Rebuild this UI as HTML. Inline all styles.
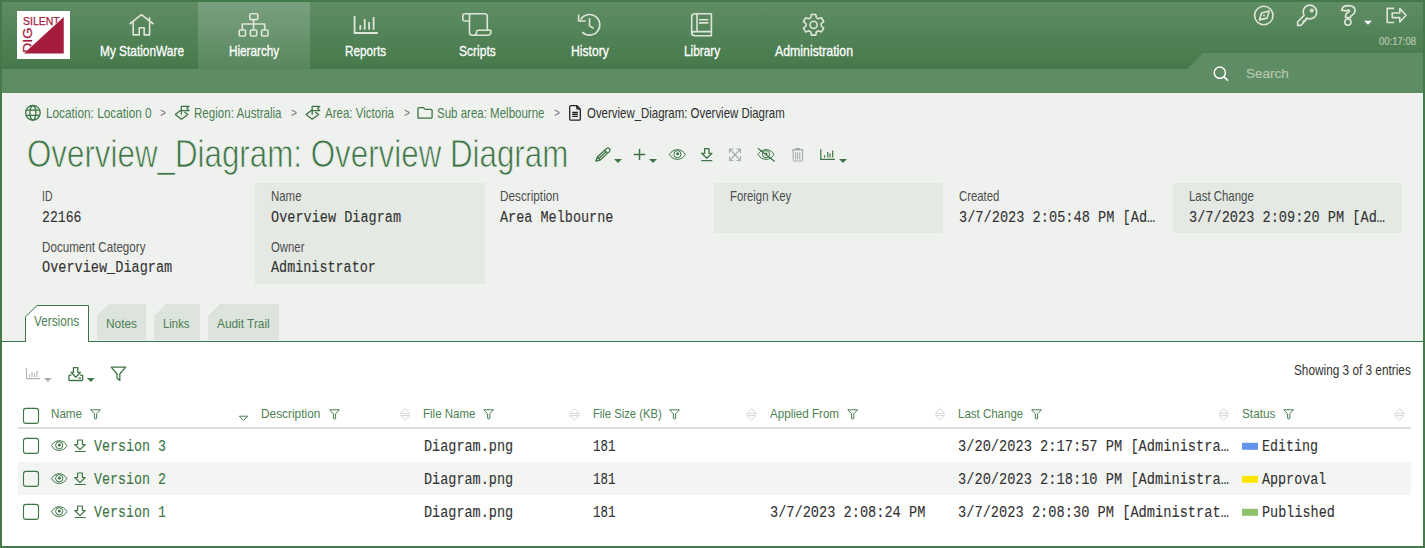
<!DOCTYPE html>
<html><head><meta charset="utf-8"><style>
html,body{margin:0;padding:0;width:1425px;height:548px;overflow:hidden;background:#eff1ee;}
.r{position:absolute;}
.t{position:absolute;white-space:nowrap;}
.ov{position:absolute;left:0;top:0;}
</style></head><body>
<div class="r" style="left:0px;top:0px;width:1425px;height:548px;background:#447a4a;"></div><div class="r" style="left:2px;top:2px;width:1421px;height:544px;background:#eff1ee;"></div><div class="r" style="left:2px;top:341px;width:1421px;height:205px;background:#ffffff;"></div><div class="r" style="left:2px;top:2px;width:1421px;height:67px;background:linear-gradient(#5f8d65,#45794b);"></div><div class="r" style="left:2px;top:69px;width:1421px;height:24px;background:#5e8c64;"></div><div class="r" style="left:198px;top:2px;width:112px;height:67px;background:linear-gradient(rgba(255,255,255,0.17),rgba(255,255,255,0.10));"></div><div class="r" style="left:255px;top:183px;width:230px;height:101px;background:#e4e9e4;"></div><div class="r" style="left:714px;top:183px;width:229px;height:50px;background:#e4e9e4;"></div><div class="r" style="left:1173px;top:183px;width:229px;height:50px;background:#e4e9e4;"></div><div class="r" style="left:18px;top:462px;width:1393px;height:33px;background:#f3f5f3;"></div><div class="r" style="left:18px;top:427px;width:1393px;height:2px;background:#dadfe1;"></div><div class="r" style="left:17px;top:11px;width:53px;height:48px;background:#ffffff;"></div><div class="t" style="left:23.00px;top:15.00px;font-family:'Liberation Sans', sans-serif;font-weight:400;font-size:11.75px;line-height:11.75px;color:#a51d3d;transform:scaleX(0.8924);transform-origin:0 0;-webkit-text-stroke:0.25px #a51d3d;">SILENT</div><div class="t" style="left:21.80px;top:52.50px;font-family:'Liberation Sans', sans-serif;font-weight:400;font-size:12.5px;line-height:12.5px;color:#a51d3d;transform:rotate(-90deg) scaleX(1.1371);transform-origin:0 0;-webkit-text-stroke:0.25px #a51d3d;">DIG</div><svg class="ov" width="1425" height="548" viewBox="0 0 1425 548"><polygon points="1187,69 1203,53 1423,53 1423,69" fill="#5e8c64"/><polygon points="97,316 109,304 146,304 146,340 97,340" fill="#dde3dd"/><polygon points="154,316 166,304 200,304 200,340 154,340" fill="#dde3dd"/><polygon points="208,316 220,304 279,304 279,340 208,340" fill="#dde3dd"/><rect x="2" y="341" width="1421" height="1" fill="#3d7544"/><polygon points="25.5,341.5 25.5,316.8 37,305.5 88.5,305.5 88.5,341.5" fill="#fff" stroke="#3d7544" stroke-width="1"/><rect x="26" y="340" width="62" height="3" fill="#fff"/><polygon points="22.4,54.5 64.75,54.5 64.75,15.4" fill="#ffffff"/><polygon points="23.9,53.5 63.75,53.5 63.75,16.9" fill="#a51d3d"/><path fill="none" stroke="#dfe5d8" stroke-width="1.6" stroke-linejoin="round" d="M129.7 24 L141.4 14.7 L153.5 24 M149.6 17.2 V21.8 M133.2 22.3 V34.9 H139.2 V27.8 H144.2 V34.9 H149.6 V22.3"/><g fill="none" stroke="#dfe5d8" stroke-width="1.6" stroke-linejoin="round"><rect x="249.8" y="13.8" width="8" height="5.8" rx="1"/><rect x="239.2" y="30" width="6.3" height="6" rx="1"/><rect x="250.4" y="30" width="6.3" height="6" rx="1"/><rect x="261.6" y="30" width="6.3" height="6" rx="1"/><path d="M253.6 19.6 V30 M242.3 30 V24 H264.7 V30"/></g><path fill="none" stroke="#dfe5d8" stroke-width="1.8" d="M354.6 16 V33 H377.8 M360.3 25 V29.8 M364.7 19 V29.8 M369.1 22 V29.8 M373.6 17.1 V29.8"/><path fill="none" stroke="#dfe5d8" stroke-width="1.6" stroke-linejoin="round" d="M469.5 21 H464.8 Q462.8 21 462.8 19 V16 Q462.8 13.8 465 13.8 H484.5 Q487.3 13.8 487.3 16.6 V30.3 M469.5 14.5 V32.5 Q469.5 35.2 472.5 35.2 H487.8 Q490.6 35.2 490.8 32.5 V30.3 H478.5 Q476.5 30.3 476.5 32.5 Q476.5 35.2 473.5 35.2"/><path fill="none" stroke="#dfe5d8" stroke-width="1.6" stroke-linejoin="round" d="M582.2 32.1 A10.3 10.3 0 1 0 580.6 19.65 M578.6 14.4 V21 H585.7 M589.5 18.2 V25.9 L593.6 28.3"/><path fill="none" stroke="#dfe5d8" stroke-width="1.6" stroke-linejoin="round" d="M711.4 13.8 V35.7 H695 Q691.7 35.7 691.7 33.6 V17 Q691.7 13.8 695 13.8 Z M697 13.8 V31.6 M691.7 33.6 Q691.7 31.6 695 31.6 H711.4 M699 19.8 H708.4 M699 22.9 H708.4"/><polygon fill="none" stroke="#dfe5d8" stroke-width="1.6" stroke-linejoin="round" points="810.84,17.61 811.40,14.43 815.80,14.43 816.36,17.61 818.45,18.82 821.48,17.71 823.68,21.52 821.21,23.60 821.21,26.00 823.68,28.08 821.48,31.89 818.45,30.78 816.36,31.99 815.80,35.17 811.40,35.17 810.84,31.99 808.75,30.78 805.72,31.89 803.52,28.08 805.99,26.00 805.99,23.60 803.52,21.52 805.72,17.71 808.75,18.82"/><circle fill="none" stroke="#dfe5d8" stroke-width="1.6" stroke-linejoin="round" cx="813.6" cy="24.8" r="3.6"/><circle fill="none" stroke="#dfe5d8" stroke-width="1.6" stroke-linejoin="round" cx="1263.8" cy="15.5" r="9.2"/><path fill="none" stroke="#dfe5d8" stroke-width="1.6" stroke-linejoin="round" d="M1269.2 10.9 L1261.5 13 L1259.5 19.9 L1267.1 18.1 Z"/><circle cx="1264" cy="15.5" r="0.9" fill="#dfe5d8"/><path fill="none" stroke="#dfe5d8" stroke-width="1.6" stroke-linejoin="round" d="M1304.0 15.4 A6.8 6.8 0 1 1 1306.7 18.0 L1305.6 19.2 L1306.3 19.9 L1304.9 21.3 L1304.2 20.6 L1303 21.8 L1303.7 22.5 L1300.8 25.4 H1297.6 V22 Z"/><circle fill="none" stroke="#dfe5d8" stroke-width="1.6" stroke-linejoin="round" cx="1311.8" cy="10.4" r="1.2" stroke-width="1.2"/><path fill="none" stroke="#dfe5d8" stroke-width="1.6" stroke-linejoin="round" d="M1341.6 10.3 Q1342.3 5.6 1348.3 5.6 Q1355.1 5.8 1355.1 10.6 Q1355.1 13.6 1351.9 15.2 Q1350.7 15.9 1350.7 17 V17.6 H1345.5 V16.6 Q1345.5 13.5 1348.5 12 Q1349.8 11.3 1349.3 10.5 Q1348.4 9.3 1346.6 10.9 Z"/><circle fill="none" stroke="#dfe5d8" stroke-width="1.6" stroke-linejoin="round" cx="1347.9" cy="22.1" r="3.1"/><polygon points="1364,20.8 1372,20.8 1368,24.8" fill="#fff"/><path fill="none" stroke="#dfe5d8" stroke-width="1.6" stroke-linejoin="round" d="M1394.2 8.4 H1387.2 V22.5 H1394.2 M1392.2 13 H1399.8 V8.6 L1406 15.3 L1399.8 22 V17.6 H1392.2 Z"/><circle fill="none" stroke="#ffffff" stroke-width="1.5" cx="1219.8" cy="72.7" r="5.6"/><path stroke="#ffffff" stroke-width="1.6" d="M1223.8 76.7 L1228 80.7"/><g fill="none" stroke="#3d7544" stroke-width="1.3" stroke-linejoin="round"><circle cx="32.9" cy="112.8" r="7.3"/><ellipse cx="32.9" cy="112.8" rx="3" ry="7.3"/><path d="M25.8 110.2 H40 M25.8 115.3 H40"/></g><path fill="none" stroke="#3d7544" stroke-width="1.3" stroke-linejoin="round" transform="translate(0.0,0)" d="M181.4 109.8 L175.3 114.5 L181.4 119.3 L187.8 114.5 L184.5 111.9 M181.4 114.8 V106.3 H189 L186.8 108.4 L189 110.6 H181.4"/><path fill="none" stroke="#3d7544" stroke-width="1.3" stroke-linejoin="round" transform="translate(130.8,0)" d="M181.4 109.8 L175.3 114.5 L181.4 119.3 L187.8 114.5 L184.5 111.9 M181.4 114.8 V106.3 H189 L186.8 108.4 L189 110.6 H181.4"/><path fill="none" stroke="#3d7544" stroke-width="1.3" stroke-linejoin="round" d="M418 118.1 V108.8 Q418 107.6 419.2 107.6 H423.5 L425.3 109.4 H430.9 Q432.1 109.4 432.1 110.6 V116.9 Q432.1 118.1 430.9 118.1 Z"/><path fill="none" stroke="#222" stroke-width="1.3" stroke-linejoin="round" d="M569.7 106.9 Q569.7 105.7 570.9 105.7 H577 L580.3 109.1 V118.9 Q580.3 120.1 579.1 120.1 H570.9 Q569.7 120.1 569.7 118.9 Z M576.8 105.7 V108.1 Q576.8 109.2 577.9 109.2 H580.3 M572.2 112.5 H577.9 M572.2 114.4 H577.9 M572.2 116.4 H577.9"/><path fill="none" stroke="#3d7544" stroke-width="1.3" stroke-linejoin="round" d="M595.80 161.20 L597.33 156.95 L606.56 148.51 A2.1 2.1 0 0 1 609.39 151.61 L600.17 160.05 Z M597.33 156.95 L600.17 160.05 M598.75 158.50 L606.13 151.75 M604.71 150.20 L607.55 153.30"/><path fill="#3d7544" d="M595.80 161.20 L596.37 159.46 L597.59 160.78 Z"/><polygon points="614,159 622,159 618.0,163" fill="#3d7544"/><path fill="none" stroke="#3d7544" stroke-width="1.5" d="M633.8 154.5 H645.2 M639.5 149.1 V160"/><polygon points="649,159 657,159 653.0,163" fill="#3d7544"/><path fill="none" stroke="#3d7544" stroke-width="1.0" d="M669.4 154.5 C673.0 148.0 681.8 148.0 685.4 154.5 C681.8 161.0 673.0 161.0 669.4 154.5 Z"/><circle fill="none" stroke="#3d7544" stroke-width="1.0" cx="677.4" cy="154.2" r="3.6"/><circle fill="#3d7544" cx="677.6" cy="153.8" r="1.5"/><path fill="none" stroke="#3d7544" stroke-width="1.3" stroke-linejoin="round" d="M704.6 148.6 H709 V153.3 H712 L706.8 158.3 L701.6 153.3 H704.6 Z M701.3 160.6 H712.3"/><path fill="none" stroke="#a8aca8" stroke-width="1.1" stroke-linejoin="round" d="M729.5 149 L740.5 160.5 M740.5 149 L729.5 160.5 M729.5 153 V149 H733.5 M736.5 149 H740.5 V153 M740.5 156.5 V160.5 H736.5 M733.5 160.5 H729.5 V156.5"/><path fill="none" stroke="#3d7544" stroke-width="1.0" d="M758.0 154.5 C761.6 148.0 770.4 148.0 774.0 154.5 C770.4 161.0 761.6 161.0 758.0 154.5 Z"/><circle fill="none" stroke="#3d7544" stroke-width="1.0" cx="766" cy="154.2" r="3.6"/><circle fill="#3d7544" cx="766.2" cy="153.8" r="1.2"/><path stroke="#3d7544" stroke-width="1.3" d="M757.8 148.2 L774.7 161.4"/><path fill="none" stroke="#a8aca8" stroke-width="1.1" stroke-linejoin="round" d="M792 149.9 H803.3 M795.6 149.6 V148.6 H799.7 V149.6 M793.2 150.2 V159.6 Q793.2 161 794.6 161 H801.2 Q802.6 161 802.6 159.6 V150.2 M795.6 152.2 V159.4 M797.7 152.2 V159.4 M799.8 152.2 V159.4"/><path fill="none" stroke="#3d7544" stroke-width="1.2" d="M820.8 149.3 V159.3 H835 M824.6 155.2 V157.6 M827.8 152 V157.6 M830.1 153.4 V157.6 M832.7 150.4 V157.6"/><polygon points="839,159 847,159 843.0,163" fill="#3d7544"/><path fill="none" stroke="#b0b3b0" stroke-width="1.1" d="M26.5 368 V378.6 H40 M29.5 374.5 V377 M32 372 V377 M34.5 373 V377 M37 370.5 V377"/><polygon points="44,378 51.7,378 47.85,382" fill="#a8aca8"/><path fill="none" stroke="#3d7544" stroke-width="1.3" stroke-linejoin="round" d="M73.4 367.6 H77.8 V372.3 H80.5 L75.8 377.2 L71.1 372.3 H73.4 Z M71.6 375.2 H69.6 Q68.9 375.2 68.9 376 V379.8 Q68.9 380.5 69.6 380.5 H82 Q82.7 380.5 82.7 379.8 V376 Q82.7 375.2 82 375.2 H80 M78.4 378.2 H81"/><polygon points="87,378 94.6,378 90.8,382" fill="#3d7544"/><path fill="none" stroke="#3d7544" stroke-width="1.3" stroke-linejoin="round" d="M111.2 367.2 H125.6 L119.8 374 V380.4 L117 378 V374 Z"/><rect x="23.5" y="408.4" width="15" height="15" rx="2.5" fill="none" stroke="#3d7544" stroke-width="1.1"/><path fill="none" stroke="#3d7544" stroke-width="0.95" stroke-linejoin="round" d="M90.6 409.8 H100.39999999999999 L96.6 413.8 V418.3 Q96.6 418.8 96.1 418.8 H94.89999999999999 Q94.39999999999999 418.8 94.39999999999999 418.3 V413.8 Z"/><path fill="none" stroke="#3d7544" stroke-width="0.95" stroke-linejoin="round" d="M329.6 409.8 H339.40000000000003 L335.6 413.8 V418.3 Q335.6 418.8 335.1 418.8 H333.90000000000003 Q333.40000000000003 418.8 333.40000000000003 418.3 V413.8 Z"/><path fill="none" stroke="#3d7544" stroke-width="0.95" stroke-linejoin="round" d="M483.8 409.8 H493.6 L489.8 413.8 V418.3 Q489.8 418.8 489.3 418.8 H488.1 Q487.6 418.8 487.6 418.3 V413.8 Z"/><path fill="none" stroke="#3d7544" stroke-width="0.95" stroke-linejoin="round" d="M669.6 409.8 H679.4 L675.6 413.8 V418.3 Q675.6 418.8 675.1 418.8 H673.9 Q673.4 418.8 673.4 418.3 V413.8 Z"/><path fill="none" stroke="#3d7544" stroke-width="0.95" stroke-linejoin="round" d="M847.8 409.8 H857.5999999999999 L853.8 413.8 V418.3 Q853.8 418.8 853.3 418.8 H852.0999999999999 Q851.5999999999999 418.8 851.5999999999999 418.3 V413.8 Z"/><path fill="none" stroke="#3d7544" stroke-width="0.95" stroke-linejoin="round" d="M1031.6 409.8 H1041.3999999999999 L1037.6 413.8 V418.3 Q1037.6 418.8 1037.1 418.8 H1035.8999999999999 Q1035.3999999999999 418.8 1035.3999999999999 418.3 V413.8 Z"/><path fill="none" stroke="#3d7544" stroke-width="0.95" stroke-linejoin="round" d="M1283.8 409.8 H1293.6 L1289.8 413.8 V418.3 Q1289.8 418.8 1289.3 418.8 H1288.1 Q1287.6 418.8 1287.6 418.3 V413.8 Z"/><path fill="none" stroke="#d3d6d3" stroke-width="1.0" stroke-linejoin="round" d="M400.3 413.4 L405.0 408.8 L409.7 413.4 Z M400.3 415.59999999999997 H409.7 L405.0 420.2 Z"/><path fill="none" stroke="#d3d6d3" stroke-width="1.0" stroke-linejoin="round" d="M569.8 413.4 L574.5 408.8 L579.1999999999999 413.4 Z M569.8 415.59999999999997 H579.1999999999999 L574.5 420.2 Z"/><path fill="none" stroke="#d3d6d3" stroke-width="1.0" stroke-linejoin="round" d="M746.8 413.4 L751.5 408.8 L756.1999999999999 413.4 Z M746.8 415.59999999999997 H756.1999999999999 L751.5 420.2 Z"/><path fill="none" stroke="#d3d6d3" stroke-width="1.0" stroke-linejoin="round" d="M935.2 413.4 L939.9000000000001 408.8 L944.6 413.4 Z M935.2 415.59999999999997 H944.6 L939.9000000000001 420.2 Z"/><path fill="none" stroke="#d3d6d3" stroke-width="1.0" stroke-linejoin="round" d="M1219 413.4 L1223.7 408.8 L1228.4 413.4 Z M1219 415.59999999999997 H1228.4 L1223.7 420.2 Z"/><path fill="none" stroke="#d3d6d3" stroke-width="1.0" stroke-linejoin="round" d="M1394.8 413.4 L1399.5 408.8 L1404.2 413.4 Z M1394.8 415.59999999999997 H1404.2 L1399.5 420.2 Z"/><path fill="none" stroke="#3d7544" stroke-width="0.95" stroke-linejoin="round" d="M239.4 416.2 H247.6 L243.5 420.5 Z"/><rect x="23.5" y="438.4" width="15" height="15" rx="2.5" fill="none" stroke="#3d7544" stroke-width="1.1"/><path fill="none" stroke="#3d7544" stroke-width="1.0" d="M51.5 445.59999999999997 C54.965 439.09999999999997 63.435 439.09999999999997 66.9 445.59999999999997 C63.435 452.09999999999997 54.965 452.09999999999997 51.5 445.59999999999997 Z"/><circle fill="none" stroke="#3d7544" stroke-width="1.0" cx="59.2" cy="445.29999999999995" r="3.6"/><circle fill="#3d7544" cx="59.400000000000006" cy="444.9" r="1.5"/><path fill="none" stroke="#3d7544" stroke-width="1.2" stroke-linejoin="round" d="M77.6 440.0 H82.4 V444.5 H85.2 L80 449.59999999999997 L74.8 444.5 H77.6 Z M74.8 451.5 H85.7"/><rect x="23.5" y="471.4" width="15" height="15" rx="2.5" fill="none" stroke="#3d7544" stroke-width="1.1"/><path fill="none" stroke="#3d7544" stroke-width="1.0" d="M51.5 478.59999999999997 C54.965 472.09999999999997 63.435 472.09999999999997 66.9 478.59999999999997 C63.435 485.09999999999997 54.965 485.09999999999997 51.5 478.59999999999997 Z"/><circle fill="none" stroke="#3d7544" stroke-width="1.0" cx="59.2" cy="478.29999999999995" r="3.6"/><circle fill="#3d7544" cx="59.400000000000006" cy="477.9" r="1.5"/><path fill="none" stroke="#3d7544" stroke-width="1.2" stroke-linejoin="round" d="M77.6 473.0 H82.4 V477.5 H85.2 L80 482.59999999999997 L74.8 477.5 H77.6 Z M74.8 484.5 H85.7"/><rect x="23.5" y="504.4" width="15" height="15" rx="2.5" fill="none" stroke="#3d7544" stroke-width="1.1"/><path fill="none" stroke="#3d7544" stroke-width="1.0" d="M51.5 511.59999999999997 C54.965 505.09999999999997 63.435 505.09999999999997 66.9 511.59999999999997 C63.435 518.0999999999999 54.965 518.0999999999999 51.5 511.59999999999997 Z"/><circle fill="none" stroke="#3d7544" stroke-width="1.0" cx="59.2" cy="511.29999999999995" r="3.6"/><circle fill="#3d7544" cx="59.400000000000006" cy="510.9" r="1.5"/><path fill="none" stroke="#3d7544" stroke-width="1.2" stroke-linejoin="round" d="M77.6 506.0 H82.4 V510.5 H85.2 L80 515.6 L74.8 510.5 H77.6 Z M74.8 517.5 H85.7"/><rect x="1242" y="442.8" width="16" height="7" fill="#6495ed"/><rect x="1242" y="475.8" width="16" height="7" fill="#ffe600"/><rect x="1242" y="508.8" width="16" height="7" fill="#8fc16a"/></svg><div class="t" style="left:100.00px;top:44.00px;font-family:'Liberation Sans', sans-serif;font-weight:400;font-size:14.5px;line-height:14.5px;color:#ffffff;transform:scaleX(0.8185);transform-origin:0 0;-webkit-text-stroke:0.3px #fff;">My StationWare</div><div class="t" style="left:228.60px;top:44.00px;font-family:'Liberation Sans', sans-serif;font-weight:400;font-size:14.5px;line-height:14.5px;color:#ffffff;transform:scaleX(0.8089);transform-origin:0 0;-webkit-text-stroke:0.3px #fff;">Hierarchy</div><div class="t" style="left:345.30px;top:44.00px;font-family:'Liberation Sans', sans-serif;font-weight:400;font-size:14.5px;line-height:14.5px;color:#ffffff;transform:scaleX(0.8099);transform-origin:0 0;-webkit-text-stroke:0.3px #fff;">Reports</div><div class="t" style="left:459.00px;top:44.00px;font-family:'Liberation Sans', sans-serif;font-weight:400;font-size:14.5px;line-height:14.5px;color:#ffffff;transform:scaleX(0.8327);transform-origin:0 0;-webkit-text-stroke:0.3px #fff;">Scripts</div><div class="t" style="left:570.80px;top:44.00px;font-family:'Liberation Sans', sans-serif;font-weight:400;font-size:14.5px;line-height:14.5px;color:#ffffff;transform:scaleX(0.8399);transform-origin:0 0;-webkit-text-stroke:0.3px #fff;">History</div><div class="t" style="left:683.80px;top:44.00px;font-family:'Liberation Sans', sans-serif;font-weight:400;font-size:14.5px;line-height:14.5px;color:#ffffff;transform:scaleX(0.8169);transform-origin:0 0;-webkit-text-stroke:0.3px #fff;">Library</div><div class="t" style="left:774.80px;top:44.00px;font-family:'Liberation Sans', sans-serif;font-weight:400;font-size:14.5px;line-height:14.5px;color:#ffffff;transform:scaleX(0.8490);transform-origin:0 0;-webkit-text-stroke:0.3px #fff;">Administration</div><div class="t" style="left:1379.00px;top:36.00px;font-family:'Liberation Sans', sans-serif;font-weight:400;font-size:11.0px;line-height:11.0px;color:#b9cbb4;transform:scaleX(0.8642);transform-origin:0 0;-webkit-text-stroke:0.2px #b9cbb4;">00:17:08</div><div class="t" style="left:1246.30px;top:67.00px;font-family:'Liberation Sans', sans-serif;font-weight:400;font-size:13.25px;line-height:13.25px;color:#b5c8b0;transform:scaleX(1.0214);transform-origin:0 0;-webkit-text-stroke:0.2px #b5c8b0;">Search</div><div class="t" style="left:45.60px;top:106.00px;font-family:'Liberation Sans', sans-serif;font-weight:400;font-size:14.5px;line-height:14.5px;color:#4c7f52;transform:scaleX(0.8135);transform-origin:0 0;">Location: Location 0</div><div class="t" style="left:194.30px;top:106.00px;font-family:'Liberation Sans', sans-serif;font-weight:400;font-size:14.5px;line-height:14.5px;color:#4c7f52;transform:scaleX(0.7986);transform-origin:0 0;">Region: Australia</div><div class="t" style="left:325.00px;top:106.00px;font-family:'Liberation Sans', sans-serif;font-weight:400;font-size:14.5px;line-height:14.5px;color:#4c7f52;transform:scaleX(0.7948);transform-origin:0 0;">Area: Victoria</div><div class="t" style="left:437.40px;top:106.00px;font-family:'Liberation Sans', sans-serif;font-weight:400;font-size:14.5px;line-height:14.5px;color:#4c7f52;transform:scaleX(0.7937);transform-origin:0 0;">Sub area: Melbourne</div><div class="t" style="left:587.30px;top:106.00px;font-family:'Liberation Sans', sans-serif;font-weight:400;font-size:14.5px;line-height:14.5px;color:#2e2e2e;transform:scaleX(0.7888);transform-origin:0 0;">Overview_Diagram: Overview Diagram</div><div class="t" style="left:159.80px;top:106.00px;font-family:'Liberation Sans', sans-serif;font-weight:400;font-size:13px;line-height:13px;color:#727278;transform:scaleX(0.7802);transform-origin:0 0;">&gt;</div><div class="t" style="left:291.00px;top:106.00px;font-family:'Liberation Sans', sans-serif;font-weight:400;font-size:13px;line-height:13px;color:#727278;transform:scaleX(0.7802);transform-origin:0 0;">&gt;</div><div class="t" style="left:403.60px;top:106.00px;font-family:'Liberation Sans', sans-serif;font-weight:400;font-size:13px;line-height:13px;color:#727278;transform:scaleX(0.7802);transform-origin:0 0;">&gt;</div><div class="t" style="left:554.00px;top:106.00px;font-family:'Liberation Sans', sans-serif;font-weight:400;font-size:13px;line-height:13px;color:#727278;transform:scaleX(0.7802);transform-origin:0 0;">&gt;</div><div class="t" style="left:26.70px;top:135.00px;font-family:'Liberation Sans', sans-serif;font-weight:400;font-size:38.75px;line-height:38.75px;color:#3d7544;transform:scaleX(0.8083);transform-origin:0 0;-webkit-text-stroke:0.75px #eff1ee;">Overview_Diagram: Overview Diagram</div><div class="t" style="left:41.50px;top:189.00px;font-family:'Liberation Sans', sans-serif;font-weight:400;font-size:14.5px;line-height:14.5px;color:#4d4d4d;transform:scaleX(0.7172);transform-origin:0 0;">ID</div><div class="t" style="left:41.50px;top:210.00px;font-family:'Liberation Mono', monospace;font-weight:400;font-size:16.75px;line-height:16.75px;color:#333333;transform:scaleX(0.7841);transform-origin:0 0;-webkit-text-stroke:0.12px #333333;">22166</div><div class="t" style="left:41.50px;top:240.00px;font-family:'Liberation Sans', sans-serif;font-weight:400;font-size:14.5px;line-height:14.5px;color:#4d4d4d;transform:scaleX(0.8027);transform-origin:0 0;">Document Category</div><div class="t" style="left:41.50px;top:260.00px;font-family:'Liberation Mono', monospace;font-weight:400;font-size:16.75px;line-height:16.75px;color:#333333;transform:scaleX(0.8096);transform-origin:0 0;-webkit-text-stroke:0.12px #333333;">Overview_Diagram</div><div class="t" style="left:271.00px;top:189.00px;font-family:'Liberation Sans', sans-serif;font-weight:400;font-size:14.5px;line-height:14.5px;color:#4d4d4d;transform:scaleX(0.7884);transform-origin:0 0;">Name</div><div class="t" style="left:271.00px;top:210.00px;font-family:'Liberation Mono', monospace;font-weight:400;font-size:16.75px;line-height:16.75px;color:#333333;transform:scaleX(0.8084);transform-origin:0 0;-webkit-text-stroke:0.12px #333333;">Overview Diagram</div><div class="t" style="left:271.00px;top:240.00px;font-family:'Liberation Sans', sans-serif;font-weight:400;font-size:14.5px;line-height:14.5px;color:#4d4d4d;transform:scaleX(0.7824);transform-origin:0 0;">Owner</div><div class="t" style="left:271.00px;top:260.00px;font-family:'Liberation Mono', monospace;font-weight:400;font-size:16.75px;line-height:16.75px;color:#333333;transform:scaleX(0.8027);transform-origin:0 0;-webkit-text-stroke:0.12px #333333;">Administrator</div><div class="t" style="left:500.40px;top:189.00px;font-family:'Liberation Sans', sans-serif;font-weight:400;font-size:14.5px;line-height:14.5px;color:#4d4d4d;transform:scaleX(0.8110);transform-origin:0 0;">Description</div><div class="t" style="left:500.40px;top:210.00px;font-family:'Liberation Mono', monospace;font-weight:400;font-size:16.75px;line-height:16.75px;color:#333333;transform:scaleX(0.8057);transform-origin:0 0;-webkit-text-stroke:0.12px #333333;">Area Melbourne</div><div class="t" style="left:729.50px;top:189.00px;font-family:'Liberation Sans', sans-serif;font-weight:400;font-size:14.5px;line-height:14.5px;color:#4d4d4d;transform:scaleX(0.7827);transform-origin:0 0;">Foreign Key</div><div class="t" style="left:958.70px;top:189.00px;font-family:'Liberation Sans', sans-serif;font-weight:400;font-size:14.5px;line-height:14.5px;color:#4d4d4d;transform:scaleX(0.7835);transform-origin:0 0;">Created</div><div class="t" style="left:958.70px;top:210.00px;font-family:'Liberation Mono', monospace;font-weight:400;font-size:16.75px;line-height:16.75px;color:#333333;transform:scaleX(0.8137);transform-origin:0 0;-webkit-text-stroke:0.12px #333333;">3/7/2023 2:05:48 PM [Ad…</div><div class="t" style="left:1188.50px;top:189.00px;font-family:'Liberation Sans', sans-serif;font-weight:400;font-size:14.5px;line-height:14.5px;color:#4d4d4d;transform:scaleX(0.7878);transform-origin:0 0;">Last Change</div><div class="t" style="left:1188.50px;top:210.00px;font-family:'Liberation Mono', monospace;font-weight:400;font-size:16.75px;line-height:16.75px;color:#333333;transform:scaleX(0.8124);transform-origin:0 0;-webkit-text-stroke:0.12px #333333;">3/7/2023 2:09:20 PM [Ad…</div><div class="t" style="left:34.00px;top:314.00px;font-family:'Liberation Sans', sans-serif;font-weight:400;font-size:14.5px;line-height:14.5px;color:#4c7f52;transform:scaleX(0.8126);transform-origin:0 0;">Versions</div><div class="t" style="left:105.80px;top:317.00px;font-family:'Liberation Sans', sans-serif;font-weight:400;font-size:13.5px;line-height:13.5px;color:#4c7f52;transform:scaleX(0.8794);transform-origin:0 0;">Notes</div><div class="t" style="left:163.40px;top:317.00px;font-family:'Liberation Sans', sans-serif;font-weight:400;font-size:13.5px;line-height:13.5px;color:#4c7f52;transform:scaleX(0.8413);transform-origin:0 0;">Links</div><div class="t" style="left:216.80px;top:317.00px;font-family:'Liberation Sans', sans-serif;font-weight:400;font-size:13.5px;line-height:13.5px;color:#4c7f52;transform:scaleX(0.8783);transform-origin:0 0;">Audit Trail</div><div class="t" style="left:1293.80px;top:363.00px;font-family:'Liberation Sans', sans-serif;font-weight:400;font-size:14.75px;line-height:14.75px;color:#333333;transform:scaleX(0.8003);transform-origin:0 0;">Showing 3 of 3 entries</div><div class="t" style="left:51.20px;top:408.00px;font-family:'Liberation Sans', sans-serif;font-weight:400;font-size:12.75px;line-height:12.75px;color:#4c7f52;transform:scaleX(0.9118);transform-origin:0 0;">Name</div><div class="t" style="left:261.40px;top:408.00px;font-family:'Liberation Sans', sans-serif;font-weight:400;font-size:12.75px;line-height:12.75px;color:#4c7f52;transform:scaleX(0.9302);transform-origin:0 0;">Description</div><div class="t" style="left:423.00px;top:408.00px;font-family:'Liberation Sans', sans-serif;font-weight:400;font-size:12.75px;line-height:12.75px;color:#4c7f52;transform:scaleX(0.9015);transform-origin:0 0;">File Name</div><div class="t" style="left:592.60px;top:408.00px;font-family:'Liberation Sans', sans-serif;font-weight:400;font-size:12.75px;line-height:12.75px;color:#4c7f52;transform:scaleX(0.8815);transform-origin:0 0;">File Size (KB)</div><div class="t" style="left:770.00px;top:408.00px;font-family:'Liberation Sans', sans-serif;font-weight:400;font-size:12.75px;line-height:12.75px;color:#4c7f52;transform:scaleX(0.9101);transform-origin:0 0;">Applied From</div><div class="t" style="left:957.80px;top:408.00px;font-family:'Liberation Sans', sans-serif;font-weight:400;font-size:12.75px;line-height:12.75px;color:#4c7f52;transform:scaleX(0.9016);transform-origin:0 0;">Last Change</div><div class="t" style="left:1241.60px;top:408.00px;font-family:'Liberation Sans', sans-serif;font-weight:400;font-size:12.75px;line-height:12.75px;color:#4c7f52;transform:scaleX(0.9246);transform-origin:0 0;">Status</div><div class="t" style="left:93.80px;top:439.00px;font-family:'Liberation Mono', monospace;font-weight:400;font-size:16.75px;line-height:16.75px;color:#3d7544;transform:scaleX(0.7972);transform-origin:0 0;-webkit-text-stroke:0.12px #3d7544;">Version 3</div><div class="t" style="left:423.60px;top:439.00px;font-family:'Liberation Mono', monospace;font-weight:400;font-size:16.0px;line-height:16.0px;color:#333333;transform:scaleX(0.8436);transform-origin:0 0;-webkit-text-stroke:0.12px #333333;">Diagram.png</div><div class="t" style="left:593.30px;top:439.00px;font-family:'Liberation Mono', monospace;font-weight:400;font-size:16.0px;line-height:16.0px;color:#333333;transform:scaleX(0.7774);transform-origin:0 0;-webkit-text-stroke:0.12px #333333;">181</div><div class="t" style="left:957.80px;top:439.00px;font-family:'Liberation Mono', monospace;font-weight:400;font-size:16.0px;line-height:16.0px;color:#333333;transform:scaleX(0.8549);transform-origin:0 0;-webkit-text-stroke:0.12px #333333;">3/20/2023 2:17:57 PM [Administra…</div><div class="t" style="left:1262.40px;top:439.00px;font-family:'Liberation Mono', monospace;font-weight:400;font-size:16.0px;line-height:16.0px;color:#333333;transform:scaleX(0.8320);transform-origin:0 0;-webkit-text-stroke:0.12px #333333;">Editing</div><div class="t" style="left:93.80px;top:472.00px;font-family:'Liberation Mono', monospace;font-weight:400;font-size:16.75px;line-height:16.75px;color:#3d7544;transform:scaleX(0.7972);transform-origin:0 0;-webkit-text-stroke:0.12px #3d7544;">Version 2</div><div class="t" style="left:423.60px;top:472.00px;font-family:'Liberation Mono', monospace;font-weight:400;font-size:16.0px;line-height:16.0px;color:#333333;transform:scaleX(0.8436);transform-origin:0 0;-webkit-text-stroke:0.12px #333333;">Diagram.png</div><div class="t" style="left:593.30px;top:472.00px;font-family:'Liberation Mono', monospace;font-weight:400;font-size:16.0px;line-height:16.0px;color:#333333;transform:scaleX(0.7774);transform-origin:0 0;-webkit-text-stroke:0.12px #333333;">181</div><div class="t" style="left:957.80px;top:472.00px;font-family:'Liberation Mono', monospace;font-weight:400;font-size:16.0px;line-height:16.0px;color:#333333;transform:scaleX(0.8549);transform-origin:0 0;-webkit-text-stroke:0.12px #333333;">3/20/2023 2:18:10 PM [Administra…</div><div class="t" style="left:1262.40px;top:472.00px;font-family:'Liberation Mono', monospace;font-weight:400;font-size:16.0px;line-height:16.0px;color:#333333;transform:scaleX(0.8371);transform-origin:0 0;-webkit-text-stroke:0.12px #333333;">Approval</div><div class="t" style="left:93.80px;top:505.00px;font-family:'Liberation Mono', monospace;font-weight:400;font-size:16.75px;line-height:16.75px;color:#3d7544;transform:scaleX(0.7972);transform-origin:0 0;-webkit-text-stroke:0.12px #3d7544;">Version 1</div><div class="t" style="left:423.60px;top:505.00px;font-family:'Liberation Mono', monospace;font-weight:400;font-size:16.0px;line-height:16.0px;color:#333333;transform:scaleX(0.8436);transform-origin:0 0;-webkit-text-stroke:0.12px #333333;">Diagram.png</div><div class="t" style="left:593.30px;top:505.00px;font-family:'Liberation Mono', monospace;font-weight:400;font-size:16.0px;line-height:16.0px;color:#333333;transform:scaleX(0.7774);transform-origin:0 0;-webkit-text-stroke:0.12px #333333;">181</div><div class="t" style="left:957.80px;top:505.00px;font-family:'Liberation Mono', monospace;font-weight:400;font-size:16.0px;line-height:16.0px;color:#333333;transform:scaleX(0.8549);transform-origin:0 0;-webkit-text-stroke:0.12px #333333;">3/7/2023 2:08:30 PM [Administrat…</div><div class="t" style="left:1262.40px;top:505.00px;font-family:'Liberation Mono', monospace;font-weight:400;font-size:16.0px;line-height:16.0px;color:#333333;transform:scaleX(0.8434);transform-origin:0 0;-webkit-text-stroke:0.12px #333333;">Published</div><div class="t" style="left:769.50px;top:505.00px;font-family:'Liberation Mono', monospace;font-weight:400;font-size:16.0px;line-height:16.0px;color:#333333;transform:scaleX(0.8513);transform-origin:0 0;-webkit-text-stroke:0.12px #333333;">3/7/2023 2:08:24 PM</div>
</body></html>
